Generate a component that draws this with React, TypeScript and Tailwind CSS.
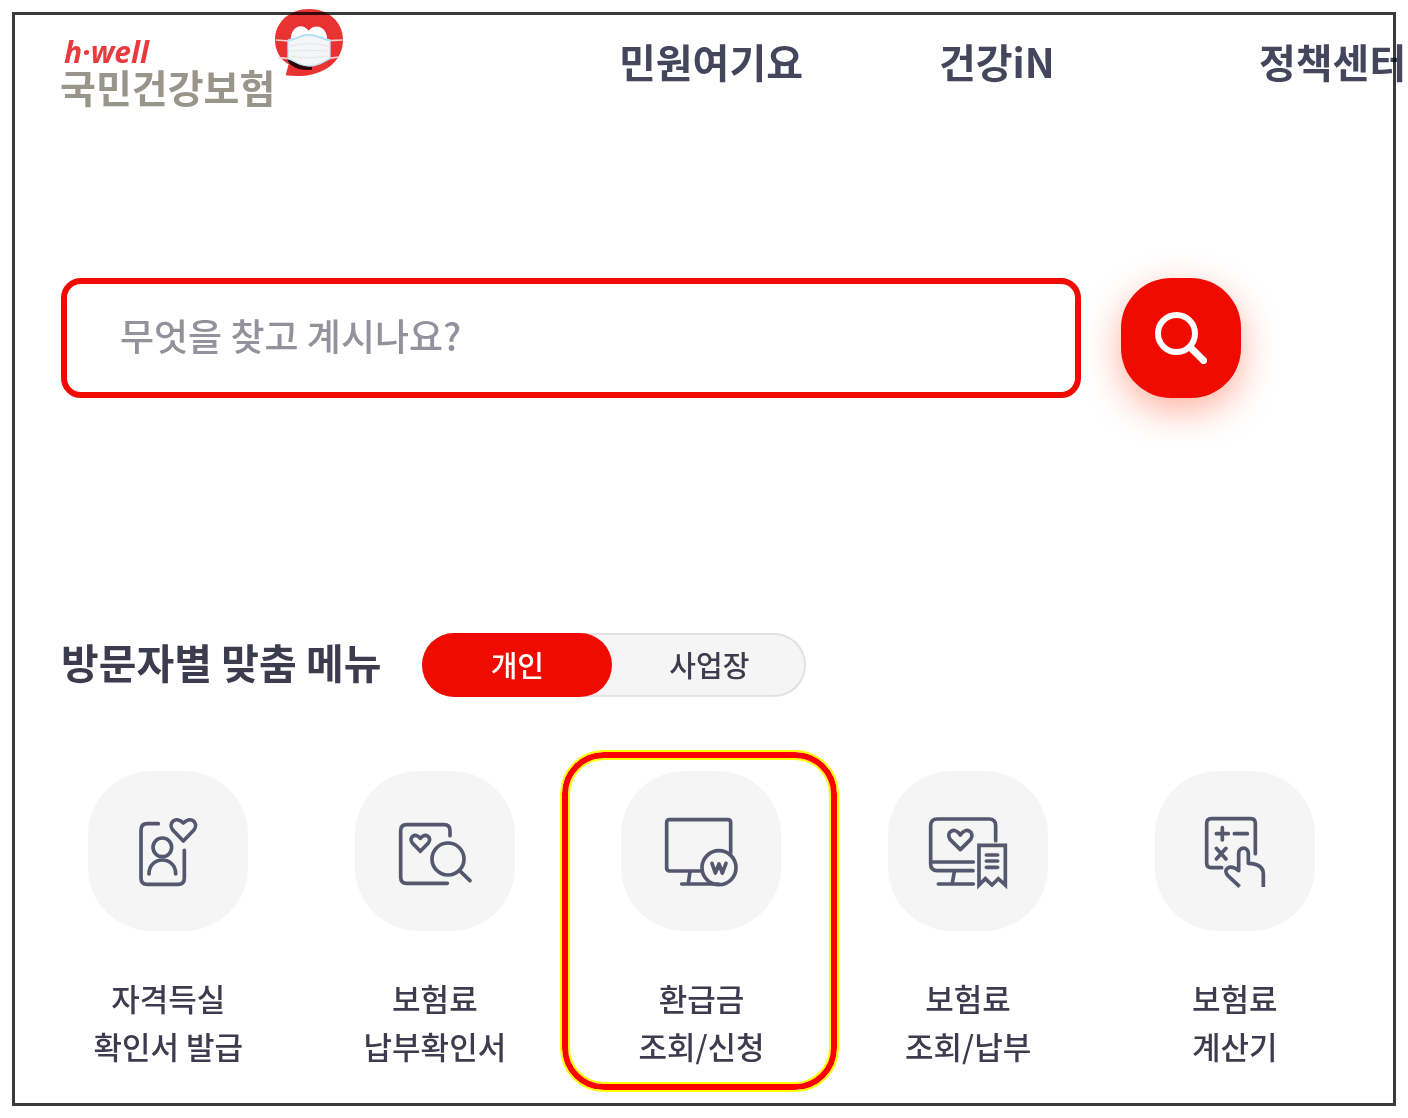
import React from 'react';

const navItems = ['민원여기요', '건강iN', '정책센터'];

interface IconProps {
  viewBox: string;
  children: React.ReactNode;
}

const Icon: React.FC<IconProps> = ({ viewBox, children }) => (
  <svg
    aria-hidden="true"
    className="size-[100px]"
    viewBox={viewBox}
    fill="none"
    stroke="#56576f"
    strokeWidth="11"
    strokeLinecap="round"
    strokeLinejoin="round"
  >
    {children}
  </svg>
);

const CertificateIcon = () => (
  <Icon viewBox="-6 3 300 300">
    <path d="M115 71H82Q63 71 63 90V234Q63 253 82 253H174Q193 253 193 234V151" />
    <circle cx="127" cy="142" r="28" />
    <path d="M87 222C87 166 167 166 167 222" />
    <path d="M190 123L159 91C142 70 166 45 190 69C214 45 238 70 221 91Z" />
  </Icon>
);

const PaymentSearchIcon = () => (
  <Icon viewBox="0 -12 300 300">
    <path d="M195 92V77Q195 59 177 59H65Q47 59 47 77V216Q47 235 65 235H187" />
    <path d="M106 139L82 114C69 97 91 81 106 100C121 81 143 97 130 114Z" />
    <circle cx="189" cy="162" r="48" />
    <path d="M223 196L255 227" />
  </Icon>
);

const RefundIcon = () => (
  <Icon viewBox="6 3 300 300">
    <path d="M158 213H62Q53 213 53 204V68Q53 59 62 59H236Q245 59 245 68V160" />
    <path d="M123 215L118 250M98 252H208" />
    <circle cx="210" cy="203" r="51" />
    <path d="M189 190L199 219L210 192L220 219L231 190" strokeWidth="11" />
  </Icon>
);

const MonitorBillIcon = () => (
  <Icon viewBox="9 3 300 300">
    <path d="M242 122V77Q242 57 222 57H67Q47 57 47 77V192Q47 212 67 212H174M50 186H175" />
    <path d="M118 215L112 249M70 252H175" />
    <path d="M136 149L105 118C91 96 119 78 136 105C153 78 181 96 167 118Z" />
    <path d="M192 255V136H271V255L250 236L231 255L211 236Z" strokeLinejoin="miter" />
    <path d="M214 165H248M214 183H248M214 202H248" />
  </Icon>
);

const CalculatorIcon = () => (
  <Icon viewBox="-15 3 300 300">
    <path d="M95 203H64Q50 203 50 189V70Q50 56 64 56H182Q196 56 196 70V161" />
    <path d="M79 101H115M97 83V120M133 101H172M79 145L108 177M108 145L79 177" />
    <path
      strokeLinecap="butt"
      d="M149 260L116 229C94 209 119 190 146 212V161C146 139 175 139 175 161V190C205 191 220 203 220 222V261"
    />
  </Icon>
);

const menuItems = [
  { lines: ['자격득실', '확인서 발급'], icon: CertificateIcon },
  { lines: ['보험료', '납부확인서'], icon: PaymentSearchIcon },
  { lines: ['환급금', '조회/신청'], icon: RefundIcon, highlighted: true },
  { lines: ['보험료', '조회/납부'], icon: MonitorBillIcon },
  { lines: ['보험료', '계산기'], icon: CalculatorIcon },
];

const LogoMark = () => (
  <svg aria-hidden="true" className="size-[68px] shrink-0" viewBox="831 27 204 204">
    <path
      fill="#e93232"
      d="M933 27C991 27 1035 66 1035 119C1035 188 971 239 863 226L872 193C845 177 831 150 831 120C831 65 877 27 933 27Z"
    />
    <path fill="#fff" d="M878 125C876 79 912 66 932 92C952 67 990 80 988 125Z" />
    <path fill="#2b0508" d="M867 177C875 201 904 213 942 209V195L880 177Z" />
    <path stroke="#f6cccc" strokeWidth="5" fill="none" d="M833 120L873 123M995 122L1034 120M841 173L875 176M990 175L1024 171" />
    <path
      fill="#f4f5f6"
      stroke="#bfe3f3"
      strokeWidth="4"
      d="M870 121C893 119 907 105 932 104C957 104 974 119 996 121V176C975 184 966 198 934 198C902 198 892 183 870 176Z"
    />
    <path stroke="#e3e6e8" strokeWidth="3" fill="none" d="M876 138Q932 124 990 138M876 153Q932 149 990 153M876 168Q932 178 990 168" />
    <path stroke="#b5e1f5" strokeWidth="6" fill="none" d="M870 121C893 119 907 105 932 104C957 104 974 119 996 121" />
  </svg>
);

const Header = () => (
  <header className="flex items-start pl-[60px] pt-[9px]">
    <a href="#" className="flex w-[559px] shrink-0 items-start">
      <span className="flex flex-col pt-[28px]">
        <span className="pl-1 font-['Open_Sans',sans-serif] text-[30px] font-bold italic leading-[30px] text-[#e93b3f]">
          h·well
        </span>
        <span className="text-[39px] font-bold leading-[38px] text-[#98968b]">국민건강보험</span>
      </span>
      <LogoMark />
    </a>
    <nav className="flex pt-[22px]">
      {navItems.map((item) => (
        <a key={item} href="#" className="w-80 shrink-0 whitespace-nowrap text-[40px] font-bold leading-[60px] text-[#45465c]">
          {item}
        </a>
      ))}
    </nav>
  </header>
);

const SearchBar = () => (
  <form className="mt-[173px] flex gap-10 pl-[61px] pr-[167px]" onSubmit={(e) => e.preventDefault()}>
    <input
      type="text"
      aria-label="검색어"
      placeholder="무엇을 찾고 계시나요?"
      className="h-[120px] min-w-0 flex-1 rounded-[20px] border-6 border-[#f00a00] bg-white px-[53px] pb-1.5 text-[37px] font-medium text-[#3d3c4e] outline-none placeholder:text-[#92929c]"
    />
    <button
      type="submit"
      aria-label="검색"
      className="flex size-[120px] shrink-0 items-center justify-center rounded-[50px] bg-[#f00a00] shadow-[0_12px_36px_rgba(255,80,40,0.45)]"
    >
      <svg aria-hidden="true" className="size-[52px]" viewBox="0 0 52 52" fill="none" stroke="#fff" strokeWidth="6">
        <circle cx="21.5" cy="21.5" r="18.5" />
        <path d="M34 34L51 51" strokeWidth="7" />
      </svg>
    </button>
  </form>
);

const App: React.FC = () => {
  return (
    <div className="relative overflow-hidden bg-white pb-12 font-['Noto_Sans_CJK_KR',sans-serif] text-[#3d3c4e]">
      <Header />
      <main>
        <SearchBar />
        <section>
          <div className="mt-[235px] flex items-start gap-[41px] pl-[61px]">
            <h2 className="text-[41px] font-bold leading-[56px]">방문자별 맞춤 메뉴</h2>
            <div className="flex h-16 w-96 rounded-full bg-[#f5f5f5] text-[29px] font-medium inset-ring-2 inset-ring-[#e2e2e6]">
              <button type="button" aria-pressed="true" className="h-full w-[190px] rounded-full bg-[#f00a00] text-white">
                개인
              </button>
              <button type="button" aria-pressed="false" className="h-full flex-1 rounded-full">
                사업장
              </button>
            </div>
          </div>
          <ul className="mt-[74px] grid grid-cols-5 pl-[35px] pr-10">
            {menuItems.map(({ lines, icon: MenuIcon, highlighted }) => (
              <li key={lines.join(' ')} className="relative">
                <a href="#" className="flex flex-col items-center">
                  <span className="flex size-40 items-center justify-center rounded-[64px] bg-[#f5f5f5]">
                    <MenuIcon />
                  </span>
                  <span className="mt-[43px] text-center text-[31px] font-medium leading-[48px]">
                    {lines[0]}
                    <br />
                    {lines[1]}
                  </span>
                </a>
                {highlighted && (
                  <span className="pointer-events-none absolute -bottom-5 -left-1.5 -right-0.5 -top-[19px] rounded-[42px] border-6 border-[#ff0000] outline-2 outline-[#ffff00] inset-ring-2 inset-ring-[#ffff00]" />
                )}
              </li>
            ))}
          </ul>
        </section>
      </main>
      <div className="pointer-events-none absolute inset-3 border-3 border-[#3a3a3a] mix-blend-multiply" />
    </div>
  );
};

export default App;
